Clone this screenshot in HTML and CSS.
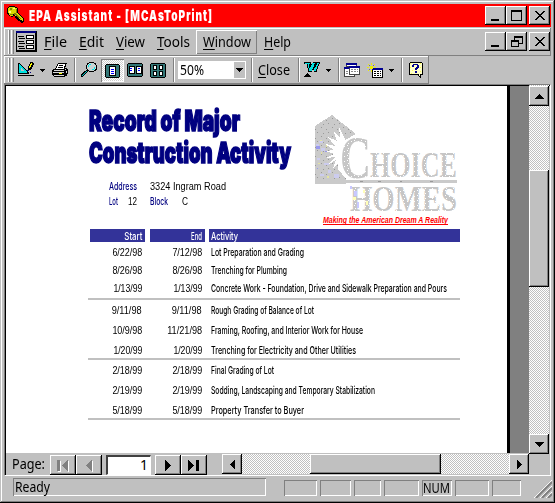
FILE: index.html
```html
<!DOCTYPE html>
<html lang="en">
<head>
<meta charset="utf-8">
<title>EPA Assistant - [MCAsToPrint]</title>
<link rel="stylesheet" href="styles.css">
</head>
<body>
<div class="window">
  <header class="title">
    <svg class="key" width="19" height="19" viewBox="0 0 19 19"><path d="M3 1h6v1h2v1h1v5h1v1h1v1h1v1h1v1h1v1h1v4h-1v1h-2v-1h-1v-1h-2v-1h-1v-1h-1v-1h-1v-1H9v-1H7v1H5v-1H3v-1H2V9H1V3h1V2h1z"/><path d="M3 2h6v1h2v5h1v1h1v1h1v1h1v1h1v1h1v3h-1v-1h-2v-1h-1v-1h-1v-1h-1v-1H9V9H7v2H4v-1H3V8H2V3h1z" fill="#d8d800"/><path d="M4 3h2v2H4zM10 4h1v4h-1zM8 8h2v1h1v1h1v1h1v1h1v1h1v1h-1v-1h-2v-1h-1v-1h-1v-1H8zM4 9h3v1H4z" fill="#808000"/><path d="M3 6h2v2H3zM7 3h2v1H7z" fill="#ff8"/></svg>
    <div class="caption"><span class="fit" data-w="184">EPA Assistant - [MCAsToPrint]</span></div>
    <div class="winbtns">
      <button><svg width="20" height="19"><path class="k" d="M5 13h8v2H5z"/></svg></button><button><svg width="20" height="19"><path class="k" fill-rule="evenodd" d="M4 4h11v11H4zM5 6v8h9V6z"/></svg></button><button class="gap"><svg width="20" height="19"><path class="k" d="M5 5h2v1h1v1h1v1h2V7h1V6h1V5h2v1h-1v1h-1v1h-1v1h-1v1h1v1h1v1h1v1h1v1h-2v-1h-1v-1h-1v-1H9v1H8v1H7v1H5v-1h1v-1h1v-1h1v-1h1V9H8V8H7V7H6V6H5z"/></svg></button>
    </div>
  </header>
  <nav class="menubar">
    <i class="grip"></i>
    <svg class="form" width="21" height="21"><path d="M0 0h21v21H0z"/><path fill="#c0c0c0" d="M1 2h18v17H1z"/><path fill="#000080" d="M0 0h20v2H0z"/><path d="M2 5h6v1H2zM3 7h6v1H3zM2 10h6v1H2zM3 12h6v1H3zM2 15h6v1H2zM3 17h6v1H3zM10 4h8v4h-8zM10 9h8v4h-8zM10 14h8v4h-8z"/><path fill="#fff" d="M11 5h6v2h-6zM11 10h6v2h-6zM11 15h6v2h-6z"/></svg>
    <div class="mi file"><span class="fit" data-w="23"><u>F</u>ile</span></div>
    <div class="mi edit"><span class="fit" data-w="25"><u>E</u>dit</span></div>
    <div class="mi view"><span class="fit" data-w="29"><u>V</u>iew</span></div>
    <div class="mi tools"><span class="fit" data-w="33"><u>T</u>ools</span></div>
    <div class="mi win"><span class="fit" data-w="48"><u>W</u>indow</span></div>
    <div class="mi help"><span class="fit" data-w="27"><u>H</u>elp</span></div>
    <div class="winbtns">
      <button><svg width="20" height="19"><path class="k" d="M5 13h8v2H5z"/></svg></button><button><svg width="20" height="19"><path class="k" fill-rule="evenodd" d="M7 4h9v8h-4v3H4V8h3zM8 6v2h4v3h3V6zM5 10v4h6v-4z"/></svg></button><button class="gap"><svg width="20" height="19"><path class="k" d="M5 5h2v1h1v1h1v1h2V7h1V6h1V5h2v1h-1v1h-1v1h-1v1h-1v1h1v1h1v1h1v1h1v1h-2v-1h-1v-1h-1v-1H9v1H8v1H7v1H5v-1h1v-1h1v-1h1v-1h1V9H8V8H7V7H6V6H5z"/></svg></button>
    </div>
  </nav>
  <div class="toolbar">
    <i class="grip"></i>
    <svg class="m3" width="18" height="16"><path d="M1 1h2v1h1v1h1v1h1v1h1v1h1v1h1v1h1v1h1v1h1v2H1z"/><path fill="#00e0e0" d="M2 2h1v1h1v1h1v1h1v1h1v1h1v1h1v1h1v2H2z"/><path fill="#c0c0c0" d="M4 6h1v1h1v1h1v1H4z"/><path d="M1 13h16v1H1zM11 4h1V2h1V0h3v1h1v2h-1v2h-1v2h-1v1h-3z"/><path fill="#ff0" d="M12 4h1V2h1V1h1v2h-1v2h-1v1h-1z"/><path fill="#000080" d="M10 8h2v1h-2zM13 10h1v1h-1z"/></svg>
    <svg class="m5 arr" width="5" height="3"><path class="k" d="M0 0h5v1H4v1H3v1H2V2H1V1H0z"/></svg>
    <svg class="m7" width="17" height="15"><path d="M6 0h9v1h-1v3h-1v1h2v1h1v5h-1v2h-2v1H2v-1H1v-1H0V7h1V6h2V5h1V3h1V1h1z"/><path fill="#fff" d="M6 1h7v2h-1v3H4V5h1V3h1z"/><path d="M7 2h4v1H7zM6 4h5v1H6z"/><path fill="#d8d8d8" d="M2 7h10v1H2zM1 9h11v1H1zM2 12h10v1H2zM13 6h1v1h-1zM14 8h1v2h-1z"/><path fill="#ff0" d="M7 10h3v1H7z"/></svg>
    <i class="sep m5"></i>
    <svg class="m5" width="16" height="16"><path d="M8 0h5v1h2v2h1v5h-1v1h-2v1H8V9H6V7H5V3h1V1h2z"/><path fill="#c8d4d4" d="M8 1h5v1h1v1h1v4h-1v1h-1v1H8V8H7V7H6V3h1V2h1z"/><path fill="#00e8e8" d="M8 2h2v1H8v2H7V3h1zM13 5h1v2h-1zM11 7h2v1h-2z"/><path d="M5 8h2v2h-1v1H5v1H4v1H3v1H2v1H0v-3h1v-1h1v-1h1V9h2z"/><path fill="#00c8c8" d="M5 9h1v1H5v1H4v1H3v1H2v1H1v-1h1v-1h1v-1h1v-1h1z"/></svg>
    <div class="pressed"><svg width="15" height="15"><path d="M1 0h13v1h1v12h-1v1H1v-1H0V1h1z"/><path fill="#337777" d="M1 1h13v12H1z"/><path d="M4 2h7v10H4z"/><path fill="#fff" d="M5 3h5v8H5z"/><path fill="#00f" d="M6 5h3v1H6zM6 7h3v1H6zM6 9h3v1H6z"/></svg></div>
    <svg class="m3 up" width="16" height="15"><path d="M1 0h14v1h1v12h-1v1H1v-1H0V1h1z"/><path fill="#337777" d="M1 1h14v12H1z"/><path d="M2 3h6v8H2zM9 3h6v8H9z"/><path fill="#fff" d="M3 4h4v6H3zM10 4h4v6h-4z"/><path fill="#00f" d="M3 5h2v1H3zM3 7h2v1H3zM11 5h2v1h-2zM11 7h2v1h-2z"/></svg>
    <svg class="m7 up" width="16" height="15"><path d="M1 0h14v1h1v13h-1v1H1v-1H0V1h1z"/><path fill="#337777" d="M1 1h14v13H1z"/><path d="M3 2h4v5H3zM9 2h4v5H9zM3 8h4v5H3zM9 8h4v5H9z"/><path fill="#fff" d="M4 3h2v3H4zM10 3h2v3h-2zM4 9h2v3H4zM10 9h2v3h-2z"/></svg>
    <i class="sep m7"></i>
    <div class="combo"><span class="fit" data-w="26">50%</span><b><svg width="7" height="4"><path class="k" d="M0 0h7v1H6v1H5v1H4v1H3V3H2V2H1V1H0z"/></svg></b></div>
    <i class="sep m5"></i>
    <div class="close"><span class="fit" data-w="32"><u>C</u>lose</span></div>
    <i class="sep m8"></i>
    <svg class="m4" width="16" height="16"><path d="M0 0h7v2h2V0h7v2h-1v2h-1v3h-1v3h-3V8H8v2H4V6H3V2H0z"/><path fill="#00e0e0" d="M1 1h5v1H5v4h1V5h1V3h1V1h3v1h-1v4h1V5h1V3h1V1h2v1h-1v2h-1v3h-1v2h-2V5H9v2H8v2H5V6H4V2H1z"/><path d="M3 11h1v1h1v1h1v1h1v1H0v-1h1v-1h1v-1h1z"/></svg>
    <svg class="m6 arr" width="5" height="3"><path class="k" d="M0 0h5v1H4v1H3v1H2V2H1V1H0z"/></svg>
    <i class="sep m7"></i>
    <svg class="m4" width="17" height="15"><path fill="#444" d="M2 0h11v10H2zM0 4h11v10H0zM5 3h11v9H5z"/><path fill="#000090" d="M2 0h11v2H2zM0 4h5v2H0zM5 3h11v2H5z"/><path fill="#fff" d="M3 2h9v1H3zM1 6h4v7H1zM5 12h5v1H5zM6 5h9v6H6z"/><path fill="#888" d="M7 6h2v1H7zM10 6h2v1h-2zM7 8h2v1H7zM10 8h2v1h-2zM13 6h1v1h-1zM13 8h1v1h-1zM2 8h2v1H2zM2 10h2v1H2z"/></svg>
    <svg class="m6" width="17" height="15"><path d="M5 5h11v10H5z"/><path fill="#000090" d="M5 5h11v2H5z"/><path fill="#fff" d="M6 7h9v7H6z"/><path d="M7 8h2v1H7zM10 8h2v1h-2zM13 8h1v1h-1zM7 10h2v1H7zM10 10h2v1h-2zM13 10h1v1h-1zM7 12h2v1H7zM10 12h2v1h-2zM13 12h1v1h-1z"/><path fill="#ee0" d="M3 3h3v3H3zM4 0h1v2H4zM0 4h2v1H0zM7 4h2v1H7zM1 1h1v1H1zM7 1h1v1H7zM4 7h1v2H4zM1 7h1v1H1z"/><path fill="#777" d="M2 2h1v1H2zM6 2h1v1H6zM2 6h1v1H2z"/></svg>
    <svg class="m5 arr" width="5" height="3"><path class="k" d="M0 0h5v1H4v1H3v1H2V2H1V1H0z"/></svg>
    <i class="sep m7"></i>
    <svg class="m6" width="14" height="16"><path d="M1 0h12v1h1v12h-2v3h-1v-1h-1v-1H9v-1H0V1h1z"/><path fill="#ffffc8" d="M1 1h12v11h-2v2h-1v-2H1z"/><path fill="#ffff50" d="M1 1h1v1H1zM11 1h1v1h-1zM1 5h1v1H1zM11 5h1v1h-1zM3 8h1v1H3zM11 9h1v1h-1zM2 11h1v1H2z"/><path fill="#000090" d="M4 2h5v1h1v3H9v1H8v1H6V6h1V5h1V3H5v2H3V3h1zM6 9h2v2H6z"/></svg>
  </div>
  <main class="doc">
    <div class="viewport">
      <article class="page">
        <div class="head">
          <div class="heads">
            <h1><span class="fit" data-w="151">Record of Major</span><br><span class="fit" data-w="202">Construction Activity</span></h1>
            <div class="info"><label><span class="fit" data-w="28">Address</span></label><p><span class="fit" data-w="76">3324 Ingram Road</span></p></div>
            <div class="info lot"><label class="l1"><span class="fit" data-w="9">Lot</span></label><p class="n"><span class="fit" data-w="9">12</span></p><label class="l2"><span class="fit" data-w="18">Block</span></label><p><span class="fit" data-w="6">C</span></p></div>
          </div>
          <svg class="logo" width="146" height="114" viewBox="314 114 146 114">
            <defs><pattern id="sp" width="7" height="5" patternUnits="userSpaceOnUse"><path fill="#c6c6c6" d="M0 0h7v5H0z"/><path fill="#fff" d="M1 1h1v1H1zM4 0h1v1H4zM5 3h1v1H5z"/></pattern>
            <pattern id="gr" width="11" height="9" patternUnits="userSpaceOnUse"><path fill="#cacaca" d="M0 0h11v9H0z"/><path fill="#999" d="M2 1h1v1H2zM7 3h1v1H7zM4 7h1v1H4zM9 6h1v1H9z"/></pattern></defs>
            <g shape-rendering="crispEdges">
            <path fill="url(#gr)" d="M315 126l17-11 24 19-11 6-7 12v17l8 10v5h-31z"/>
            <path fill="#ccccee" d="M316 144h3v3h-3zM319 141h4v2h-4zM321 148h4v3h-4zM317 158h3v2h-3zM324 163h5v2h-5zM320 174h4v2h-4zM328 170h3v3h-3zM334 174h5v4h-5z"/>
            <path fill="#9999ee" d="M316 146h4v3h-4zM325 151h2v1h-2zM317 168h1v1h-1z"/>
            <path fill="#e4e4a0" d="M320 140h2v1h-2zM326 144h1v3h-1zM321 152h1v2h-1zM318 163h2v1h-2zM327 176h2v2h-2z"/>
            <path fill="#fff" d="M346 141l-7-14 1 10-6-5 3 9-9-4 7 9-10-2 9 6-9 1 9 3-8 4 9-1-6 7 7-4-3 8 7-7 1 10 5-4z"/>
            <path fill="#cacaca" d="M315 180h142v3H315zM315 183h31v1h-31z"/><path fill="#999" d="M360 181h3v1h-3zM378 181h3v1h-3zM400 181h2v1h-2zM430 181h3v1h-3z"/></g>
            <g class="brand" fill="url(#sp)"><text x="340" y="178" font-size="61" textLength="31" lengthAdjust="spacingAndGlyphs">C</text><text x="370" y="177" font-size="36" textLength="87" lengthAdjust="spacingAndGlyphs">HOICE</text><text x="350" y="211" font-size="36" textLength="107" lengthAdjust="spacingAndGlyphs">HOMES</text></g>
            <path fill="#c8c8ff" d="M350 186h2v3h-2zM354 191h3v5h-3zM357 202h2v6h-2z"/><path fill="#ffffb8" d="M353 197h3v3h-3zM363 190h2v3h-2zM366 201h2v4h-2z"/>
            <text class="tag" x="323" y="223" textLength="125" lengthAdjust="spacingAndGlyphs">Making the American Dream A Reality</text><path fill="#f00" d="M323 224h125v1H323z"/>
          </svg>
        </div>
        <div class="row th"><div class="d"><span class="fit" data-w="18">Start</span></div><div class="d"><span class="fit" data-w="11">End</span></div><div class="a"><span class="fit" data-w="27">Activity</span></div></div>
        <section class="g g1">
        <div class="row"><div class="d"><span class="fit" data-w="30">6/22/98</span></div><div class="d"><span class="fit" data-w="30">7/12/98</span></div><div class="a"><span class="fit" data-w="93">Lot Preparation and Grading</span></div></div>
        <div class="row"><div class="d"><span class="fit" data-w="30">8/26/98</span></div><div class="d"><span class="fit" data-w="30">8/26/98</span></div><div class="a"><span class="fit" data-w="76">Trenching for Plumbing</span></div></div>
        <div class="row"><div class="d"><span class="fit" data-w="29">1/13/99</span></div><div class="d"><span class="fit" data-w="29">1/13/99</span></div><div class="a"><span class="fit" data-w="236">Concrete Work - Foundation, Drive and Sidewalk Preparation and Pours</span></div></div>
        </section>
        <section class="g">
        <div class="row"><div class="d"><span class="fit" data-w="30">9/11/98</span></div><div class="d"><span class="fit" data-w="30">9/11/98</span></div><div class="a"><span class="fit" data-w="103">Rough Grading of Balance of Lot</span></div></div>
        <div class="row"><div class="d"><span class="fit" data-w="30">10/9/98</span></div><div class="d"><span class="fit" data-w="35">11/21/98</span></div><div class="a"><span class="fit" data-w="152">Framing, Roofing, and Interior Work for House</span></div></div>
        <div class="row"><div class="d"><span class="fit" data-w="29">1/20/99</span></div><div class="d"><span class="fit" data-w="29">1/20/99</span></div><div class="a"><span class="fit" data-w="145">Trenching for Electricity and Other Utilities</span></div></div>
        </section>
        <section class="g">
        <div class="row"><div class="d"><span class="fit" data-w="30">2/18/99</span></div><div class="d"><span class="fit" data-w="30">2/18/99</span></div><div class="a"><span class="fit" data-w="63">Final Grading of Lot</span></div></div>
        <div class="row"><div class="d"><span class="fit" data-w="30">2/19/99</span></div><div class="d"><span class="fit" data-w="30">2/19/99</span></div><div class="a"><span class="fit" data-w="164">Sodding, Landscaping and Temporary Stabilization</span></div></div>
        <div class="row"><div class="d"><span class="fit" data-w="30">5/18/99</span></div><div class="d"><span class="fit" data-w="30">5/18/99</span></div><div class="a"><span class="fit" data-w="93">Property Transfer to Buyer</span></div></div>
        </section>
      </article>
    </div>
    <div class="vscroll"><button class="up-b"><svg width="9" height="5"><path class="k" d="M4 0h1v1h1v1h1v1h1v1h1v1H0V4h1V3h1V2h1V1h1z"/></svg></button><i class="vthumb"></i><button><svg width="9" height="5"><path class="k" d="M0 0h9v1H8v1H7v1H6v1H5v1H4V4H3V3H2V2H1V1H0z"/></svg></button></div>
    <div class="pager">
      <div class="plabel"><span class="fit" data-w="33">Page:</span></div>
      <button><svg class="off" width="12" height="11"><path d="M0 0h3v11H0zM11 0v11h-1V10H9V9H8V8H7V7H6V6H5V5h1V4h1V3h1V2h1V1h1V0z"/></svg></button><button><svg class="off" width="7" height="11"><path d="M6 0v11H5V10H4V9H3V8H2V7H1V6H0V5h1V4h1V3h1V2h1V1h1V0z"/></svg></button>
      <div class="field"><span>1</span></div>
      <button><svg width="7" height="11"><path class="k" d="M0 0h1v1h1v1h1v1h1v1h1v1h1v1H5v1H4v1H3v1H2v1H1v1H0z"/></svg></button><button><svg width="12" height="11"><path class="k" d="M0 0h1v1h1v1h1v1h1v1h1v1h1v1H5v1H4v1H3v1H2v1H1v1H0zM8 0h3v11H8z"/></svg></button>
      <div class="hscroll"><button><svg width="5" height="9"><path class="k" d="M4 0h1v9H4V8H3V7H2V6H1V5H0V4h1V3h1V2h1V1h1z"/></svg></button><i class="hthumb"></i><button><svg width="5" height="9"><path class="k" d="M0 0h1v1h1v1h1v1h1v1h1v1H4v1H3v1H2v1H1v1H0z"/></svg></button></div>
    </div>
  </main>
  <footer class="status">
    <div class="cell ready"><span class="fit" data-w="35">Ready</span></div>
    <div class="cell c1"></div><div class="cell c2"></div><div class="cell c3"></div><div class="cell c4"></div><div class="cell c5"><span class="fit" data-w="27">NUM</span></div><div class="cell c6"></div><div class="cell c7"></div>
    <svg class="resize" width="18" height="18"><path stroke="#fff" d="M0 18L18 0M6 18L18 6M12 18L18 12"/><path stroke="#808080" stroke-width="2" d="M2 18L18 2M8 18L18 8M14 18l4-4"/></svg>
  </footer>
</div>
<script src="fit.js"></script>
</body>
</html>
```
FILE: styles.css
```css
* { box-sizing: border-box; }
body { margin: 0; font: 14px/16px "Noto Sans", sans-serif; color: #000; }
.window { width: 555px; height: 503px; background: #c0c0c0; padding: 4px 4px 3px; overflow: hidden; box-shadow: inset -1px -1px #000, inset 1px 1px #c0c0c0, inset -2px -2px #808080, inset 2px 2px #fff; display: flex; flex-direction: column; }
.window > * { flex-shrink: 0; }
.fit { display: inline-block; white-space: nowrap; transform-origin: 0 50%; }
svg { display: block; flex: none; shape-rendering: crispEdges; }
.logo, .resize { shape-rendering: auto; }
.k { fill: #000; }
u { text-decoration: underline; text-underline-offset: 2px; text-decoration-thickness: 1px; text-decoration-skip-ink: none; }
button { flex: none; border: 0; padding: 0; background: #c0c0c0; display: flex; align-items: center; justify-content: center; box-shadow: inset -1px -1px #000, inset 1px 1px #fff, inset -2px -2px #808080; }

.title { height: 23px; background: #f00; display: flex; }
.key { margin: 1px 0 0 2px; }
.caption { width: 184px; margin: 3px 0 0 4px; color: #fff; font: 900 15px/18px Inter, sans-serif; letter-spacing: 1.5px; }
.winbtns { display: flex; margin: 2px 1px 0 auto; }
.menubar .winbtns { margin: 4px 1px 0 auto; }
.winbtns button { width: 21px; height: 19px; }
.winbtns .gap { margin-left: 2px; }

.menubar { height: 28px; margin-top: 1px; display: flex; box-shadow: inset -1px -1px #808080, inset 1px 1px #fff; }
.grip { flex: none; width: 6px; height: 24px; margin: 2px 0 0 4px; background: linear-gradient(90deg, #fff 0 1px, #c0c0c0 1px 1.5px, #808080 1.5px 2.5px, #c0c0c0 2.5px 3px, #fff 3px 4px, #c0c0c0 4px 5px, #808080 5px 6px); }
.form { margin: 3px 0 0 2px; }
.mi { height: 24px; line-height: 20px; margin-top: 2px; padding-top: 2px; }
.file { width: 23px; margin-left: 7px; }
.edit { width: 25px; margin-left: 12px; }
.view { width: 29px; margin-left: 12px; }
.tools { width: 33px; margin-left: 12px; }
.win { width: 61px; margin-left: 6px; padding-left: 7px; box-shadow: inset 1px 1px #fff, inset -1px -1px #808080; }
.help { width: 27px; margin-left: 7px; }

.toolbar { width: 425px; height: 28px; display: flex; align-items: center; box-shadow: inset -1px -1px #808080, inset 1px 1px #fff; }
.toolbar .grip { margin-top: 0; }
.sep { flex: none; width: 2px; height: 24px; background: linear-gradient(90deg, #808080 50%, #fff 50%); }
.m3 { margin-left: 3px; } .m4 { margin-left: 4px; } .m5 { margin-left: 5px; } .m6 { margin-left: 6px; } .m7 { margin-left: 7px; } .m8 { margin-left: 8px; }
.pressed { width: 23px; height: 23px; margin-left: 4px; padding: 5px 0 0 4px; background: repeating-conic-gradient(#fff 0 25%, #d0d0d0 0 50%) 0 0 / 2px 2px; box-shadow: inset 1px 1px #808080, inset -1px -1px #fff; }
.combo { width: 68px; height: 18px; margin-left: 3px; background: #fff; display: flex; padding: 1px 1px 1px 2px; }
.combo .fit { width: 30px; }
.combo b { width: 11px; height: 16px; margin-left: auto; background: #c0c0c0; display: flex; align-items: center; justify-content: center; }
.close { width: 32px; margin-left: 5px; }

.doc { width: 547px; height: 392px; border: 1px solid #808080; border-right-color: #fff; border-bottom-color: #fff; display: grid; grid-template: 368px 22px / 524px 20px; box-shadow: inset 1px 1px #000; }
.viewport { background: #808080; margin: 1px 0 0 1px; }
.page { width: 504px; height: 367px; background: #fff; border-right: 3px solid #000; padding: 19px 0 0 82px; overflow: hidden; }
.head { height: 124px; display: flex; }
.heads { width: 226px; }
.logo { margin-top: 9px; overflow: visible; }
.brand { font-family: "Liberation Serif", serif; font-weight: bold; }
.tag { font: italic bold 8.5px "Liberation Sans", sans-serif; fill: #f00; }
h1 { margin: 0 0 10px; padding-left: 1px; font: 900 28px/32px Inter, sans-serif; color: #000080; -webkit-text-stroke: 1.6px #000080; }
.info { display: flex; height: 15px; margin-left: 21px; font: 10px/15px "Liberation Sans", sans-serif; white-space: nowrap; }
.info p { margin: 0; }
.info label { width: 41px; color: #000080; font-family: Inter, sans-serif; font-size: 11px; font-weight: 500; }
.info .l1 { width: 19px; }
.info .n { width: 22px; }
.info .l2 { width: 32px; }
.row { display: flex; height: 20px; font: 10px/20px "Liberation Sans", sans-serif; }
.row .d { width: 60px; padding-right: 6px; padding-top: 1px; text-align: right; }
.row .d .fit { transform-origin: 100% 50%; }
.row .a { width: 251px; padding-left: 3px; font-family: Inter, sans-serif; font-size: 11px; font-weight: 500; }
.th { height: 13px; line-height: 15px; margin-left: 2px; font: 500 11px/15px Inter, sans-serif; color: #fff; }
.th .d { width: 55px; margin-right: 5px; padding-right: 3px; padding-top: 0; background: #339; }
.th .a { margin-left: -1px; padding-left: 2px; background: #339; }
.g { width: 372px; height: 60px; border-bottom: 2px solid #c0c0c0; }
.g1 { height: 58px; padding-top: 1px; }
.g1 .row { height: 18px; line-height: 18px; }

.vscroll, .hscroll { background: repeating-conic-gradient(#fff 0 25%, #c0c0c0 0 50%) 0 0 / 2px 2px; }
.vscroll { display: flex; flex-direction: column; padding-top: 1px; }
.vscroll button { width: 20px; height: 20px; }
.vthumb, .hthumb { display: block; flex: none; background: #c0c0c0; box-shadow: inset -1px -1px #000, inset 1px 1px #fff, inset -2px -2px #808080; }
.vthumb { height: 117px; margin: 64px 0 147px; }
.pager { grid-column: 1 / 3; display: flex; padding: 1px 0 0 1px; box-shadow: inset 1px 0 #000; }
.plabel { width: 38px; margin-left: 6px; padding-top: 2px; }
.pager > button { width: 26px; height: 20px; margin-top: 1px; }
.off { fill: #808080; filter: drop-shadow(1px 1px #fff); }
.field { width: 45px; height: 20px; margin: 1px 4px 0; background: #fff; border: 1px solid #808080; border-width: 2px 1px 1px 2px; border-color: #404040 #fff #fff #404040; text-align: right; padding-right: 2px; }
.hscroll { width: 307px; height: 20px; margin-left: 15px; display: flex; }
.hscroll button { width: 20px; height: 20px; }
.hthumb { width: 131px; height: 20px; margin: 0 68px 0 68px; }

.status { height: 23px; display: flex; padding-top: 4px; }
.cell { flex: none; height: 16px; box-shadow: inset 1px 1px #808080, inset -1px -1px #fff; margin-right: 3px; }
.ready { width: 253px; height: 18px; margin: -2px 18px 0 9px; padding: 1px 0 0 2px; }
.c1 { width: 33px; } .c2 { width: 31px; } .c3 { width: 27px; } .c4 { width: 35px; } .c5 { width: 30px; padding-left: 1px; } .c6 { width: 34px; } .c7 { width: 29px; }
.resize { margin: 0 0 0 10px; }
```
FILE: fit.js
```javascript
// Condense or widen each label to the width its data-w names.
document.querySelectorAll('.fit').forEach(function (el) {
  el.style.transform = 'scaleX(' + el.dataset.w / el.getBoundingClientRect().width + ')';
});
```
